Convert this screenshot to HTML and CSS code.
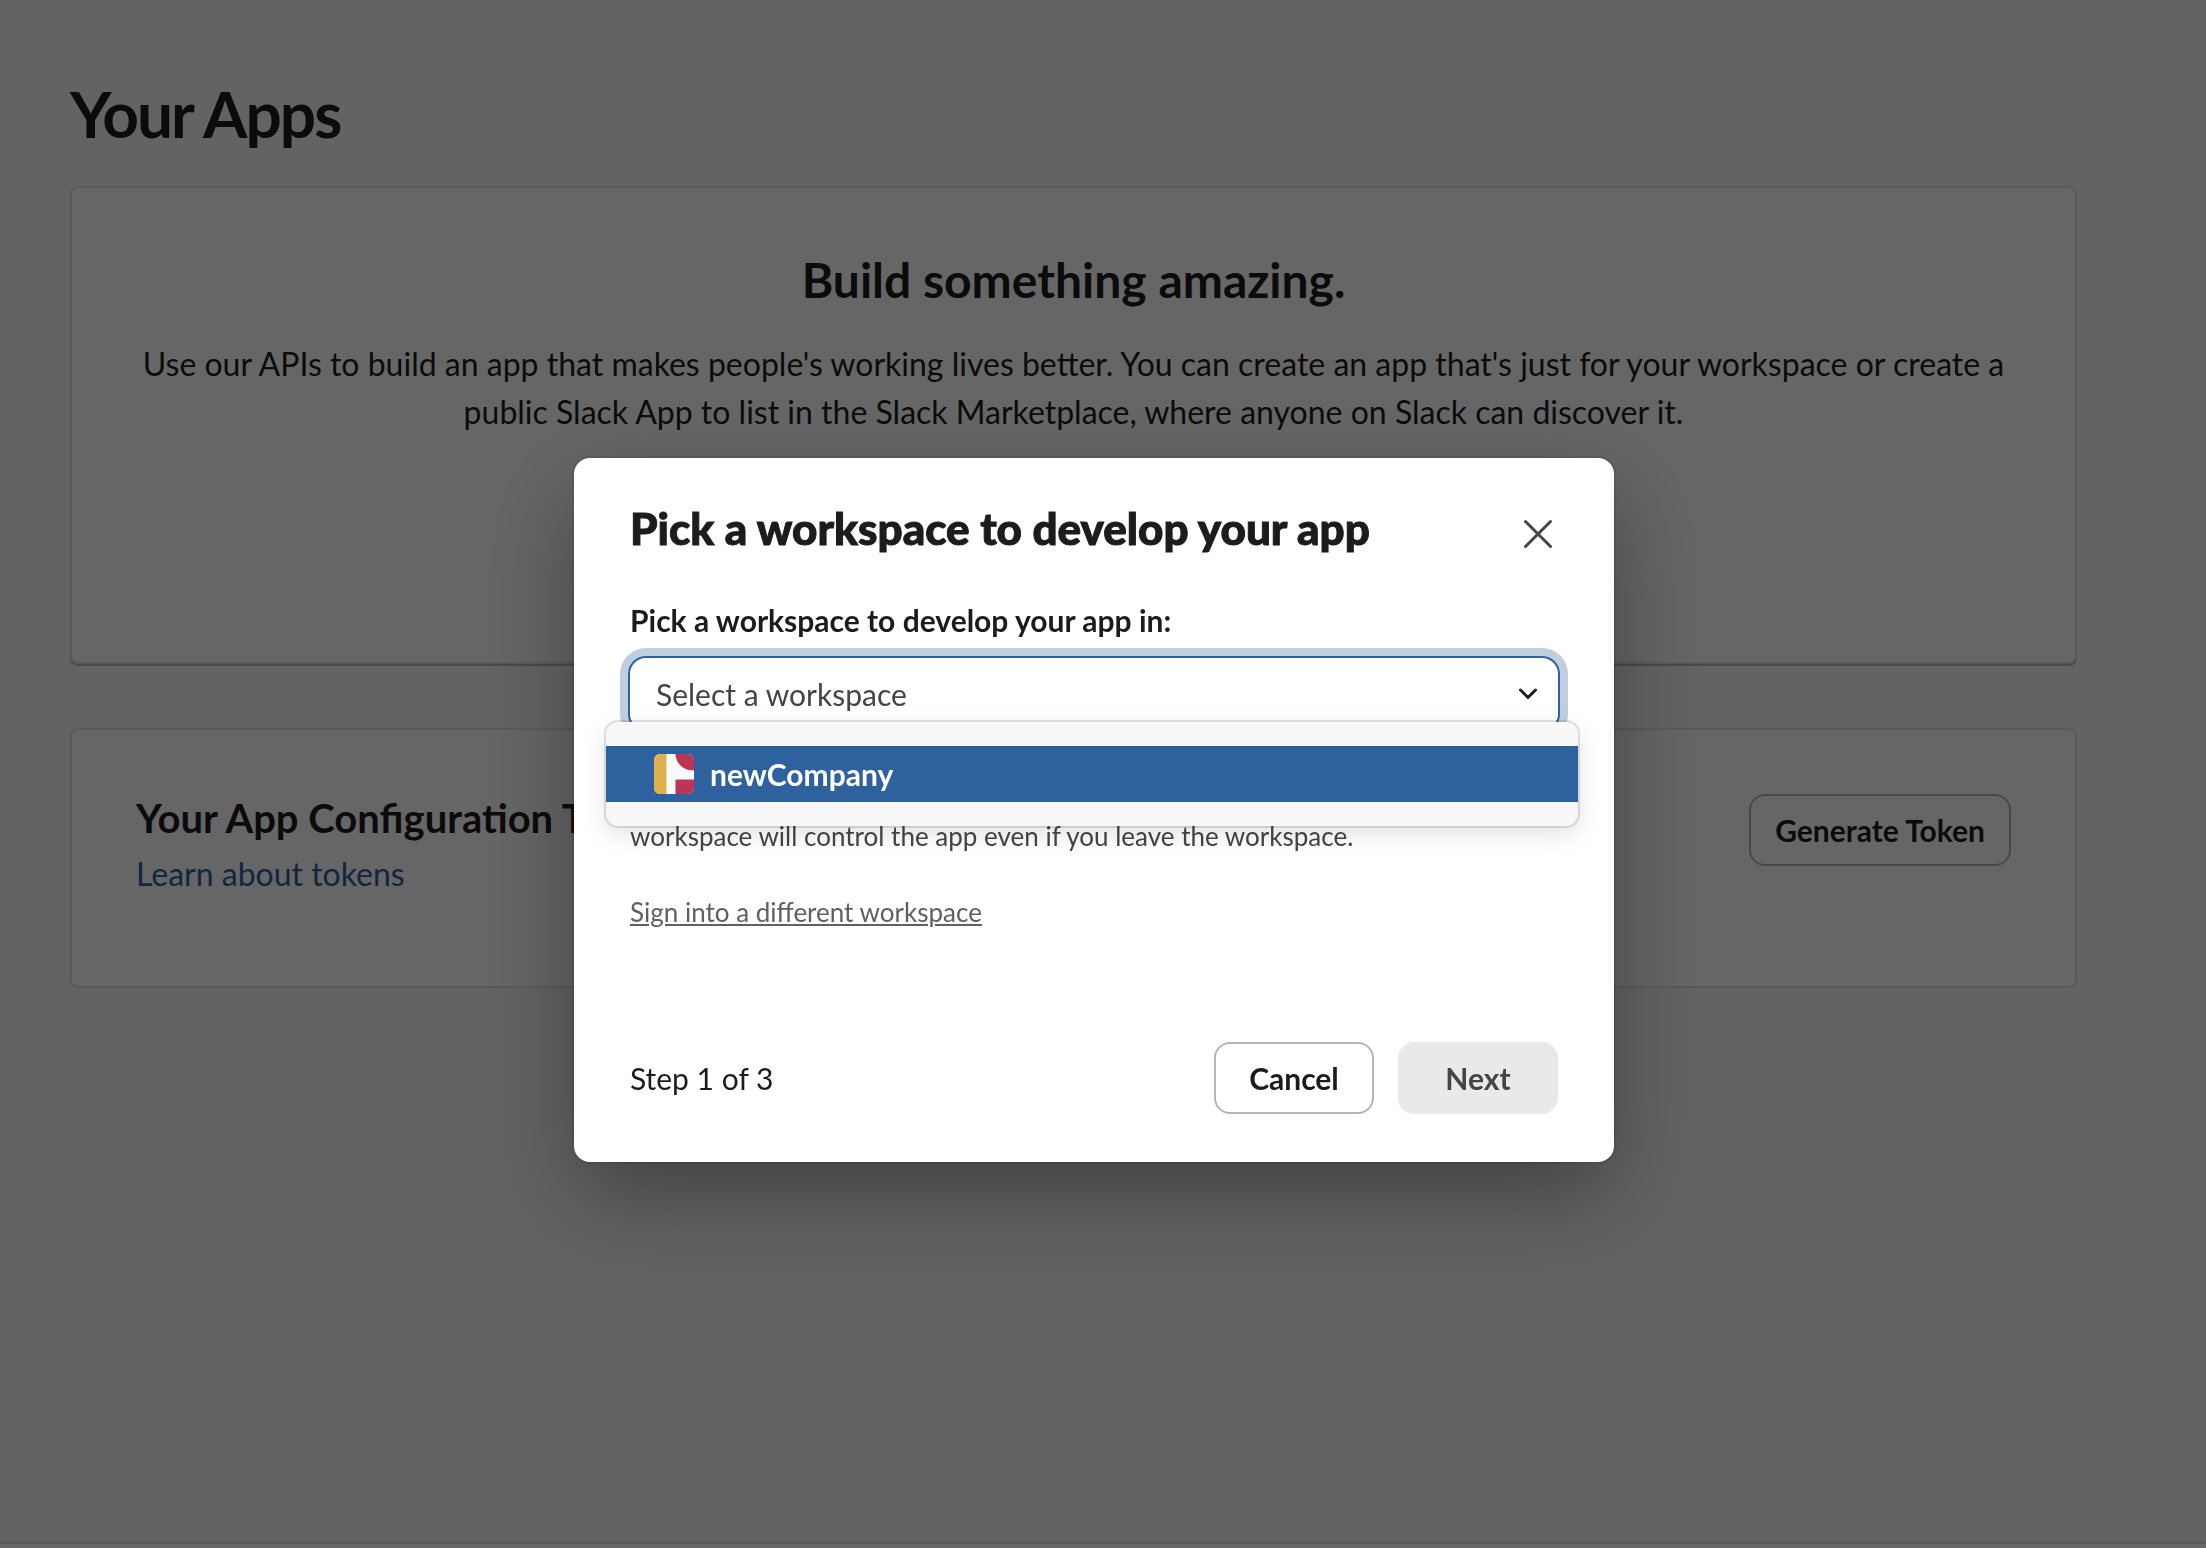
FILE: index.html
```html
<!DOCTYPE html>
<html lang="en">
<head>
<meta charset="utf-8">
<meta name="viewport" content="width=device-width, initial-scale=1">
<title>Your Apps</title>
<link rel="stylesheet" href="styles.css">
</head>
<body>
<main class="page">
  <h1 class="page-title">Your Apps</h1>
  <section class="card card-intro">
    <h2 class="intro-title">Build something amazing.</h2>
    <p class="intro-text">Use our APIs to build an app that makes people's working lives better. You can create an app that's just for your workspace or create a public Slack App to list in the Slack Marketplace, where anyone on Slack can discover it.</p>
  </section>
  <section class="card card-tokens">
    <div>
      <h3 class="tokens-title">Your App Configuration Tokens</h3>
      <a class="tokens-link" href="#tokens">Learn about tokens</a>
    </div>
    <button class="button button-fit" type="button">Generate Token</button>
  </section>
</main>
<footer class="site-footer"></footer>

<div class="overlay">
  <div class="modal" role="dialog" aria-modal="true" aria-labelledby="modal-title">
    <header class="modal-header">
      <h2 class="modal-title" id="modal-title">Pick a workspace to develop your app</h2>
      <button class="close" type="button" aria-label="Close">
        <svg width="32" height="32" viewBox="0 0 32 32" fill="none" stroke="currentColor" stroke-width="3" stroke-linecap="round"><path d="M3.5 3.500l25 25M28.500 3.500l-25 25"/></svg>
      </button>
    </header>
    <label class="field-label" for="workspace">Pick a workspace to develop your app in:</label>
    <div class="field">
      <select class="select" id="workspace">
        <option>Select a workspace</option>
      </select>
      <svg class="chevron" width="20" height="14" viewBox="0 0 20 14" fill="none" stroke="currentColor" stroke-width="3" stroke-linecap="round" stroke-linejoin="round"><path d="M2.5 3l7.5 7.5L17.5 3"/></svg>
      <ul class="menu" role="listbox" aria-label="Workspaces">
        <li class="menu-item" role="option" aria-selected="true">
          <svg class="logo" width="40" height="40" viewBox="0 0 40 40"><rect width="40" height="40" fill="#fafafa"/><rect width="12" height="40" fill="#dfb04c"/><rect x="12" width="1" height="40" fill="#ead9a0"/><path d="M21.500 0H40v16.500C29 16.500 21.500 9 21.500 0z" fill="#bd3454"/><path d="M21.500 25.500H40V40H21.500z" fill="#bd3454"/></svg>
          newCompany
        </li>
      </ul>
    </div>
    <p class="hint">workspace will control the app even if you leave the workspace.</p>
    <a class="signin" href="#signin">Sign into a different workspace</a>
    <div class="modal-footer">
      <span class="step">Step 1 of 3</span>
      <button class="button" type="button">Cancel</button>
      <button class="button button-next" type="button" disabled>Next</button>
    </div>
  </div>
</div>
</body>
</html>
```
FILE: styles.css
```css
* {
  box-sizing: border-box;
}

body {
  display: flex;
  flex-direction: column;
  min-height: 100vh;
  margin: 0;
  background: #f8f8f8;
  color: #1d1c1d;
  font-family: Lato, sans-serif;
  font-size: 30px;
}

h1,
h2,
h3,
p {
  margin: 0;
}

button,
select {
  font: inherit;
}

.page {
  flex: 1;
  padding: 72px 129px 72px 70px;
}

.page-title {
  margin-bottom: 30px;
  font-size: 64px;
  line-height: 84px;
  letter-spacing: -2px;
}

.card {
  border: 2px solid #e1e1e1;
  border-radius: 8px;
  background: #fff;
  padding: 64px;
}

.card-intro {
  min-height: 478px;
  margin-bottom: 64px;
  box-shadow: 0 2px 0 #b9b9b9;
  text-align: center;
}

.intro-title {
  margin-bottom: 32px;
  font-size: 48px;
  line-height: 56px;
}

.intro-text {
  font-size: 32px;
  line-height: 48px;
}

.card-tokens {
  display: flex;
  align-items: flex-start;
  justify-content: space-between;
  min-height: 260px;
}

.tokens-title {
  margin-bottom: 8px;
  font-size: 40px;
  line-height: 48px;
}

.tokens-link {
  display: block;
  color: #2d5f9e;
  font-size: 32px;
  line-height: 48px;
  text-decoration: none;
}

.button {
  width: 160px;
  height: 72px;
  padding: 0 24px;
  border: 2px solid #b5b5b5;
  border-radius: 16px;
  background: #fff;
  color: #1d1c1d;
  font-weight: 700;
}

.button-fit {
  width: auto;
}

.button-next {
  border-color: #e9e9e9;
  background: #e9e9e9;
  color: #454447;
}

.site-footer {
  height: 6px;
  border-top: 2px solid #e1e1e1;
  background: #fff;
}

.overlay {
  position: fixed;
  inset: 0;
  display: flex;
  align-items: center;
  justify-content: center;
  padding: 72px 18px 0 0;
  background: rgba(0, 0, 0, 0.6);
}

.modal {
  width: 1040px;
  max-width: 100%;
  padding: 40px 56px 48px;
  border-radius: 16px;
  background: #fff;
  box-shadow: 0 0 0 2px rgba(29, 28, 29, 0.13), 0 36px 96px rgba(0, 0, 0, 0.35);
}

.modal-header {
  display: flex;
  align-items: center;
  justify-content: space-between;
  margin-bottom: 40px;
}

.modal-title {
  font-size: 44px;
  font-weight: 900;
  line-height: 60px;
  -webkit-text-stroke: 1px currentColor;
}

.close {
  display: flex;
  padding: 12px 4px 0;
  border: 0;
  background: none;
  color: #454447;
}

.field-label {
  display: block;
  margin-bottom: 16px;
  font-weight: 700;
  line-height: 44px;
}

.field {
  position: relative;
}

.select {
  display: block;
  width: 100%;
  height: 72px;
  padding: 0 26px;
  border: 0;
  border-radius: 16px;
  outline: 0;
  appearance: none;
  background: #fff;
  box-shadow: 0 0 0 2px #2d629e, 0 0 0 10px #c0cfe0;
  color: #454447;
}

.chevron {
  position: absolute;
  top: 29px;
  right: 20px;
  color: #1d1c1d;
}

.menu {
  position: absolute;
  top: 64px;
  right: -20px;
  left: -24px;
  margin: 0;
  padding: 24px 0;
  border-radius: 12px;
  background: #f8f8f8;
  box-shadow: 0 0 0 2px rgba(29, 28, 29, 0.13), 0 8px 24px rgba(0, 0, 0, 0.12);
  list-style: none;
}

.menu-item {
  display: flex;
  align-items: center;
  gap: 16px;
  height: 56px;
  padding: 0 48px;
  background: #2d629e;
  color: #fff;
  font-weight: 700;
}

.logo {
  border-radius: 6px;
}

.hint {
  margin-top: 88px;
  margin-bottom: 40px;
  color: #454447;
  font-size: 26px;
  line-height: 36px;
}

.signin {
  display: block;
  width: fit-content;
  color: #616061;
  font-size: 26px;
  line-height: 36px;
}

.modal-footer {
  display: flex;
  align-items: center;
  gap: 24px;
  margin-top: 112px;
}

.step {
  flex: 1;
}
```
